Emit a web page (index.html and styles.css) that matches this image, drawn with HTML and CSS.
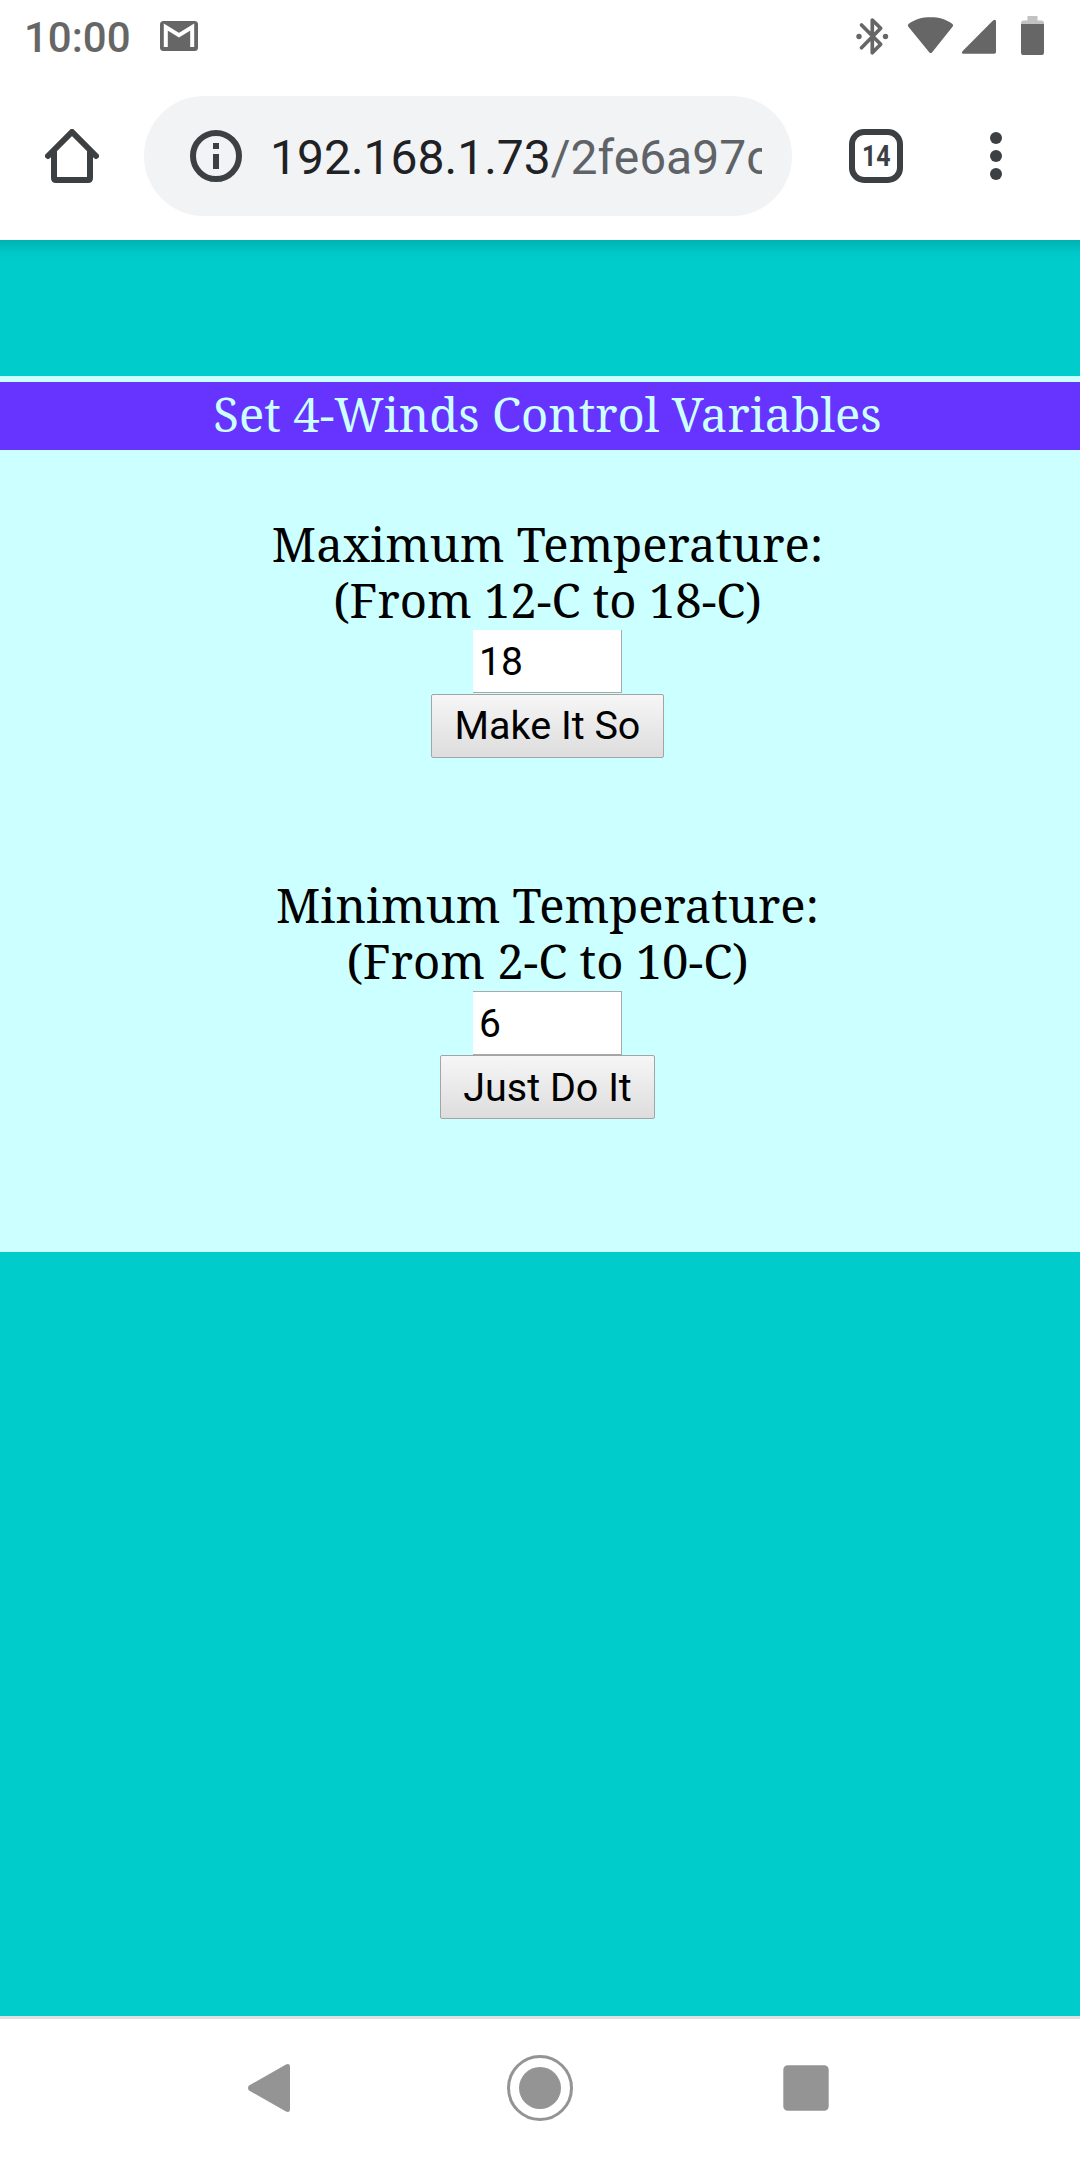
FILE: index.html
```html
<!DOCTYPE html>
<html lang="en">
<head>
<meta charset="utf-8">
<title>4-Winds Control</title>
<link rel="stylesheet" href="styles.css">
</head>
<body>
<div class="status">
  <span class="clock">10:00</span>
  <svg class="gmail" width="38" height="30" viewBox="0 0 38 30"><rect width="38" height="30" rx="3.5" fill="#666"/><path d="M5.8 26V6L19 14.2 32.2 6v20" fill="none" stroke="#fff" stroke-width="4"/></svg>
  <svg class="signals" width="190" height="42" viewBox="0 0 190 42" fill="#666">
    <path d="M5.500 9 24.700 28.300 16.300 36.800V4L24.700 12.300 5.500 31.700" fill="none" stroke="#666" stroke-width="3.700" stroke-linecap="round" stroke-linejoin="round"/>
    <circle cx="3" cy="20.5" r="2.7"/><circle cx="29.500" cy="20.5" r="2.7"/>
    <path d="M52.500 8C59 3 66 1.200 74.500 1.200S90 3 96.500 8q1.200 1.200.2 2.400L76 36.400q-1.300 1.200-2.600 0L52.200 10.400q-1-1.200.3-2.400z"/>
    <path d="M140 5.5V36q0 1.8-1.8 1.8H107.500q-3 0-.8-2.8L137 4.6q3-2 3 .9z"/>
    <path d="M165 9V7q0-2.500 2-2.500h4.500V0h10v4.500h4.500q2 0 2 2.500v2z" fill="#c2c2c2"/><path d="M165 8h23v28.500q0 2.500-2 2.500h-19q-2 0-2-2.500z"/>
  </svg>
</div>
<div class="toolbar">
  <svg class="home" width="54" height="54" viewBox="0 0 54 54" fill="none" stroke="#3c4043" stroke-width="6" stroke-linecap="round" stroke-linejoin="round"><path d="M3 27 27 3 51 27M9 22v27q0 2 2 2h32q2 0 2-2V22" stroke-linejoin="miter"/></svg>
  <div class="omnibox">
    <svg width="52" height="52" viewBox="0 0 52 52"><circle cx="26" cy="26" r="23" fill="none" stroke="#3c4043" stroke-width="6"/><path d="M23 13h6v6h-6zM23 24h6v15h-6z" fill="#3c4043"/></svg>
    <div class="url">192.168.1.73<span class="path">/2fe6a97c</span></div>
  </div>
  <div class="tabs"><span>14</span></div>
  <svg class="more" width="12" height="48" viewBox="0 0 12 48" fill="#3c4043"><circle cx="6" cy="6" r="6"/><circle cx="6" cy="24" r="6"/><circle cx="6" cy="42" r="6"/></svg>
</div>
<main class="page">
  <div class="panel">
    <h1 class="title">Set 4-Winds Control Variables</h1>
    <form class="group">
      <label class="line" for="max">Maximum Temperature:</label>
      <div class="line range">(From 12-C to 18-C)</div>
      <input class="field" id="max" type="text" value="18">
      <button class="btn" type="button">Make It So</button>
    </form>
    <form class="group second">
      <label class="line" for="min">Minimum Temperature:</label>
      <div class="line range">(From 2-C to 10-C)</div>
      <input class="field topline" id="min" type="text" value="6">
      <button class="btn narrow" type="button">Just Do It</button>
    </form>
  </div>
</main>
<nav class="nav">
  <svg width="42" height="48" viewBox="0 0 42 48"><path d="M42 3v42q0 4-4 2.500L1 26.500q-2-2.500 0-5L38 .5q4-1.500 4 2.500z" fill="#949494"/></svg>
  <svg class="nav-home" width="66" height="66" viewBox="0 0 66 66"><circle cx="33" cy="33" r="31.500" fill="none" stroke="#949494" stroke-width="3"/><circle cx="33" cy="33" r="21" fill="#949494"/></svg>
  <svg class="nav-recents" width="46" height="46" viewBox="0 0 46 46"><rect x=".3" y=".3" width="45.400" height="45.400" rx="4.500" fill="#949494"/></svg>
</nav>
</body>
</html>
```
FILE: styles.css
```css
* { box-sizing: border-box; }
body {
  margin: 0;
  width: 1080px;
  height: 2160px;
  overflow: hidden;
  display: flex;
  flex-direction: column;
  background: #fff;
  font-family: Roboto, sans-serif;
}
svg { display: block; flex: none; }

.status {
  height: 72px;
  display: flex;
  align-items: flex-start;
  padding: 0 34px 0 24px;
}
.clock {
  width: 136px;
  margin-top: 13px;
  font-size: 42px;
  line-height: 49px;
  font-weight: 500;
  color: #666;
}
.gmail { margin-top: 21px; }
.signals { margin: 16px 0 0 auto; }

.toolbar {
  height: 168px;
  display: flex;
  align-items: center;
  padding: 0 78px 0 45px;
}
.omnibox {
  width: 648px;
  height: 120px;
  margin-left: 45px;
  padding: 0 30px 0 46px;
  border-radius: 60px;
  background: #f1f3f4;
  display: flex;
  align-items: center;
}
.url {
  flex: 1;
  margin-left: 28px;
  padding-top: 3px;
  overflow: hidden;
  white-space: nowrap;
  font-size: 48px;
  line-height: 60px;
  color: #202124;
}
.path { color: #5f6368; }
.tabs {
  width: 54px;
  height: 54px;
  margin-left: 57px;
  border: 6px solid #3c4043;
  border-radius: 15px;
  display: flex;
  align-items: center;
  justify-content: center;
  font-size: 30px;
  line-height: 36px;
  font-weight: 700;
  color: #3c4043;
}
.tabs span { transform: scaleX(.83); }
.more { margin-left: auto; }

.page {
  height: 1776px;
  padding-top: 136px;
  background: linear-gradient(rgba(0, 70, 70, .2), rgba(0, 70, 70, .04) 12px, transparent 20px) #0cc;
}
.panel {
  width: 1095px;
  height: 876px;
  padding-top: 6px;
  background: #cff;
  font-family: "Noto Serif", "Droid Serif", serif;
  font-size: 47.25px;
}
.title {
  margin: 0;
  height: 68px;
  font-size: inherit;
  font-weight: 400;
  line-height: 64px;
  text-align: center;
  background: #63f;
  color: #cff;
}
.group {
  margin-top: 66px;
  display: flex;
  flex-direction: column;
  align-items: center;
}
.second { margin-top: 119px; }
.line {
  line-height: 56px;
  white-space: nowrap;
}
.range { margin-bottom: 2px; }
.field {
  width: 149px;
  height: 63px;
  border: 0 solid #a9a9a9;
  border-right-width: 1px;
  border-bottom-width: 1px;
  padding: 2px 0 0 6px;
  background: #fff;
  color: #000;
  font: 39px/60px Roboto, sans-serif;
}
.btn {
  width: 233px;
  height: 64px;
  margin-top: 1px;
  padding: 0;
  border: 1px solid #a4a4a4;
  border-radius: 2px;
  background: linear-gradient(#f6f6f6, #ddd);
  color: #000;
  font: 39.500px/60px Roboto, sans-serif;
}
.topline { height: 64px; border-top-width: 1px; }
.narrow { width: 215px; margin-top: 0; padding-top: 2px; }

.nav {
  height: 144px;
  display: flex;
  align-items: center;
  padding: 0 0 3px 248px;
  border-top: 3px solid #e0e0e0;
}
.nav-home { margin-left: 217px; }
.nav-recents { margin-left: 210px; }
```
